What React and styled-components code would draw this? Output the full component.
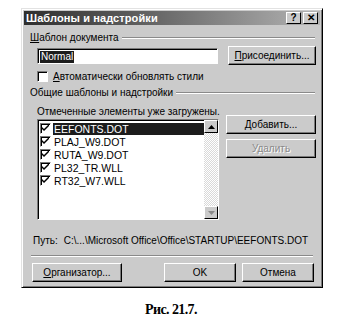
import React from 'react';
import styled, { createGlobalStyle } from 'styled-components';

const Global = createGlobalStyle`
  html, body {
    margin: 0;
    padding: 0;
    background: #ffffff;
  }
  body {
    font-family: "Liberation Sans", Arial, sans-serif;
    font-size: 10px;
    color: #000;
  }
`;

const Page = styled.div`
  width: 348px;
  height: 318px;
  padding: 8px 0 0 21px;
  box-sizing: border-box;
`;

const Dialog = styled.div`
  width: 302px;
  height: 280px;
  box-sizing: border-box;
  background: #cbcbcb;
  border-top: 1px solid #e2e2e2;
  border-left: 1px solid #e2e2e2;
  border-right: 1px solid #000;
  border-bottom: 1px solid #000;
  box-shadow: inset 1px 1px #ffffff, inset -1px -1px #7a7a7a;
  padding: 2px 2px 0 2px;
  display: flex;
  flex-direction: column;
`;

const TitleBar = styled.div`
  height: 14px;
  display: flex;
  align-items: center;
  justify-content: space-between;
  background: linear-gradient(90deg, #2e2e2e 0%, #5a5a5a 35%, #b4b4b4 100%);
  padding: 0 2px 0 2px;
`;

const Title = styled.span`
  color: #ffffff;
  font-weight: bold;
  font-size: 11px;
  letter-spacing: 0.1px;
`;

const TitleButtons = styled.div`
  display: flex;
  gap: 2px;
`;

const TitleButton = styled.div`
  width: 15px;
  height: 12px;
  box-sizing: border-box;
  background: #cbcbcb;
  border-top: 1px solid #fff;
  border-left: 1px solid #fff;
  border-right: 1px solid #000;
  border-bottom: 1px solid #000;
  display: flex;
  align-items: center;
  justify-content: center;
  font-weight: bold;
  font-size: 10px;
  line-height: 1;
`;

const Body = styled.div`
  flex: 1;
  padding: 6px 4px 0 6px;
  display: flex;
  flex-direction: column;
`;

const GroupHead = styled.div`
  display: flex;
  align-items: center;
  gap: 3px;
  height: 13px;
  margin-top: ${p => p.$top || 0}px;
  &::after {
    content: '';
    flex: 1;
    height: 0;
    border-top: 1px solid #8a8a8a;
    border-bottom: 1px solid #fff;
    margin-right: 1px;
  }
`;

const Underline = styled.span`
  text-decoration: underline;
`;

const Row = styled.div`
  display: flex;
  align-items: ${p => p.$align || 'center'};
  margin-top: ${p => p.$top || 0}px;
  padding-left: ${p => p.$indent || 0}px;
  gap: ${p => p.$gap || 0}px;
`;

const Sunken = styled.div`
  box-sizing: border-box;
  background: #ffffff;
  border-top: 1px solid #7a7a7a;
  border-left: 1px solid #7a7a7a;
  border-right: 1px solid #fff;
  border-bottom: 1px solid #fff;
  box-shadow: inset 1px 1px #000;
`;

const TextInput = styled(Sunken)`
  width: 185px;
  height: 16px;
  padding: 2px 0 0 2px;
  display: flex;
  align-items: flex-start;
`;

const Selected = styled.span`
  background: #1c1c1c;
  color: #ffffff;
  line-height: 12px;
  padding: 0 1px;
`;

const Button = styled.div`
  width: ${p => p.$w || 90}px;
  height: ${p => p.$h || 19}px;
  margin-left: ${p => p.$ml || 0}px;
  margin-right: ${p => p.$mr || 0}px;
  box-sizing: border-box;
  background: #cbcbcb;
  border-top: 1px solid #fff;
  border-left: 1px solid #fff;
  border-right: 1px solid #000;
  border-bottom: 1px solid #000;
  box-shadow: inset -1px -1px #7a7a7a;
  display: flex;
  align-items: center;
  justify-content: center;
  color: ${p => (p.$disabled ? '#8a8a8a' : '#000')};
  text-shadow: ${p => (p.$disabled ? '1px 1px #fff' : 'none')};
`;

const CheckBox = styled(Sunken)`
  width: 11px;
  height: 11px;
  flex: none;
  display: flex;
  align-items: center;
  justify-content: center;
`;

const Hint = styled.div`
  height: 13px;
  line-height: 13px;
`;

const ListArea = styled.div`
  display: flex;
  align-items: flex-start;
  gap: 7px;
  margin-top: 1px;
  padding-left: 7px;
`;

const ListBox = styled(Sunken)`
  width: 187px;
  height: 101px;
  display: flex;
  padding: 2px 0 2px 2px;
`;

const Items = styled.div`
  flex: 1;
  display: flex;
  flex-direction: column;
`;

const Item = styled.div`
  display: flex;
  align-items: center;
  height: 13px;
  gap: 2px;
`;

const ItemText = styled.span`
  flex: 1;
  line-height: 12px;
  padding-left: 1px;
  font-size: 10.5px;
  background: ${p => (p.$sel ? '#1c1c1c' : 'transparent')};
  color: ${p => (p.$sel ? '#fff' : '#000')};
`;

const ScrollBar = styled.div`
  width: 14px;
  align-self: stretch;
  margin: -2px 0;
  display: flex;
  flex-direction: column;
  justify-content: space-between;
  background: repeating-conic-gradient(#d9d9d9 0 25%, #ffffff 0 50%) 0 0 / 2px 2px;
`;

const Arrow = styled.div`
  width: 14px;
  height: 13px;
  box-sizing: border-box;
  background: #cbcbcb;
  border-top: 1px solid #fff;
  border-left: 1px solid #fff;
  border-right: 1px solid #000;
  border-bottom: 1px solid #000;
  display: flex;
  align-items: center;
  justify-content: center;
`;

const SideButtons = styled.div`
  display: flex;
  flex-direction: column;
  gap: 5px;
  margin-top: -4px;
`;

const PathRow = styled.div`
  display: flex;
  gap: 6px;
  margin-top: 14px;
  padding-left: 3px;
  height: 13px;
  line-height: 13px;
  white-space: nowrap;
`;

const Separator = styled.div`
  margin: 8px 3px 0 1px;
  border-top: 1px solid #8a8a8a;
  border-bottom: 1px solid #fff;
`;

const Footer = styled.div`
  display: flex;
  align-items: center;
  margin-top: 6px;
  padding-left: 2px;
`;

const Spacer = styled.div`
  flex: 1;
`;

const Caption = styled.div`
  width: 300px;
  margin-top: 14px;
  text-align: center;
  font-family: "Liberation Serif", "Times New Roman", serif;
  font-weight: bold;
  font-size: 14px;
  letter-spacing: -0.6px;
`;

const Check = () => (
  <svg width="7" height="7" viewBox="0 0 7 7">
    <path d="M0 2 L0 4 L2 6 L7 1 L7 -1 L2 4 Z" fill="#000" />
  </svg>
);

const Tri = ({ down }) => (
  <svg width="7" height="4" viewBox="0 0 7 4">
    <path d={down ? 'M0 0 H7 L3.5 4 Z' : 'M3.5 0 L7 4 H0 Z'} fill={down ? '#8a8a8a' : '#000'} />
  </svg>
);

const files = ['EEFONTS.DOT', 'PLAJ_W9.DOT', 'RUTA_W9.DOT', 'PL32_TR.WLL', 'RT32_W7.WLL'];

export default function App() {
  return (
    <Page>
      <Global />
      <Dialog>
        <TitleBar>
          <Title>Шаблоны и надстройки</Title>
          <TitleButtons>
            <TitleButton>?</TitleButton>
            <TitleButton>✕</TitleButton>
          </TitleButtons>
        </TitleBar>
        <Body>
          <GroupHead><span><Underline>Ш</Underline>аблон документа</span></GroupHead>
          <Row $top={2} $indent={7} $gap={10}>
            <TextInput><Selected>Normal</Selected></TextInput>
            <Button $w={90}><span><Underline>П</Underline>рисоединить...</span></Button>
          </Row>
          <Row $top={6} $indent={7} $gap={5}>
            <CheckBox />
            <span><Underline>А</Underline>втоматически обновлять стили</span>
          </Row>
          <GroupHead $top={4}><span>Общие шаблоны и надстройки</span></GroupHead>
          <Row $top={6} $indent={7}>
            <Hint>Отмеченные элементы уже загружены.</Hint>
          </Row>
          <ListArea>
            <ListBox>
              <Items>
                {files.map((f, i) => (
                  <Item key={f}>
                    <CheckBox><Check /></CheckBox>
                    <ItemText $sel={i === 0}>{f}</ItemText>
                  </Item>
                ))}
              </Items>
              <ScrollBar>
                <Arrow><Tri /></Arrow>
                <Arrow><Tri down /></Arrow>
              </ScrollBar>
            </ListBox>
            <SideButtons>
              <Button $w={90}><span><Underline>Д</Underline>обавить...</span></Button>
              <Button $w={90} $disabled>Удалить</Button>
            </SideButtons>
          </ListArea>
          <PathRow>
            <span>Путь:</span>
            <span>C:\...\Microsoft Office\Office\STARTUP\EEFONTS.DOT</span>
          </PathRow>
          <Separator />
          <Footer>
            <Button $w={90}><span><Underline>О</Underline>рганизатор...</span></Button>
            <Spacer />
            <Button $w={72}>OK</Button>
            <Button $w={72} $ml={6} $mr={2}>Отмена</Button>
          </Footer>
        </Body>
      </Dialog>
      <Caption>Рис. 21.7.</Caption>
    </Page>
  );
}
